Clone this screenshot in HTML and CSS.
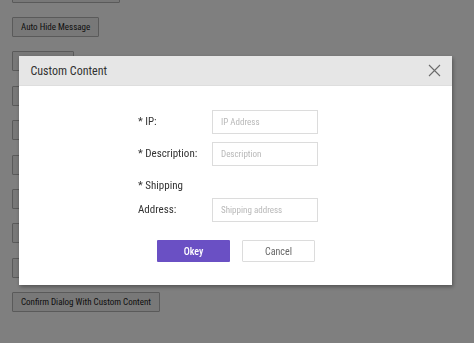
FILE: index.html
```html
<!DOCTYPE html>
<html lang="en">
<head>
    <meta charset="UTF-8">
    <meta name="viewport" content="width=device-width, initial-scale=1.0">
    <title>Dialog Demo</title>
    <link rel="stylesheet" href="styles.css">
</head>
<body>
    <div class="demo-list">
        <button class="demo-btn">Message With Close Icon</button>
        <button class="demo-btn">Auto Hide Message</button>
        <button class="demo-btn">Basic Dialog</button>
        <button class="demo-btn">Alert Dialog</button>
        <button class="demo-btn">Confirm Dialog</button>
        <button class="demo-btn">Prompt Dialog</button>
        <button class="demo-btn">Dialog With Title</button>
        <button class="demo-btn">Dialog Without Mask</button>
        <button class="demo-btn">Draggable Dialog</button>
        <button class="demo-btn">Confirm Dialog With Custom Content</button>
    </div>

    <div class="mask">
        <div class="dialog">
            <div class="dialog-header">
                <span class="dialog-title">Custom Content</span>
                <button class="dialog-close" aria-label="Close">
                    <svg width="13" height="13" viewBox="0 0 13 13">
                        <path d="M1 1 L12 12 M12 1 L1 12" stroke="#6b6b6b" stroke-width="1.1" fill="none"/>
                    </svg>
                </button>
            </div>
            <div class="dialog-body">
                <form class="form-grid">
                    <label class="form-label" for="ip">* IP:</label>
                    <input class="form-input" id="ip" type="text" placeholder="IP Address">

                    <label class="form-label" for="desc">* Description:</label>
                    <input class="form-input" id="desc" type="text" placeholder="Description">

                    <label class="form-label" for="addr">* Shipping<br>Address:</label>
                    <input class="form-input" id="addr" type="text" placeholder="Shipping address">
                </form>
                <div class="dialog-actions">
                    <button class="btn btn-primary">Okey</button>
                    <button class="btn btn-default">Cancel</button>
                </div>
            </div>
        </div>
    </div>
</body>
</html>
```

FILE: styles.css
```css
:root {
    --primary: #6a50c4;
    --border: #dcdcdc;
    --text: #333;
}

body {
    font-family: Roboto, 'Liberation Sans', sans-serif;
    font-stretch: 75%;
    margin: 0;
    padding: 0 12px;
    background: #fff;
    overflow: hidden;
    height: 343px;
}

.demo-list {
    display: flex;
    flex-direction: column;
    align-items: flex-start;
    gap: 14.4px;
    margin-top: -17.4px;
}

.demo-btn {
    font-family: inherit;
    font-stretch: 75%;
    height: 20px;
    padding: 0 8px;
    font-size: 9px;
    color: #222;
    background: #f0f0f0;
    border: 1px solid #b4b4b4;
    border-radius: 1px;
}

.mask {
    position: fixed;
    inset: 0;
    background: rgba(0, 0, 0, 0.5);
    display: flex;
    align-items: center;
    justify-content: center;
    padding: 0 4px 2px 0;
}

.dialog {
    width: 433px;
    background: #fff;
    box-shadow: 1px 2px 4px rgba(0, 0, 0, 0.35);
}

.dialog-header {
    height: 30px;
    background: #e6e6e6;
    border-bottom: 1px solid #dedede;
    box-sizing: border-box;
    display: flex;
    align-items: center;
    justify-content: space-between;
    padding: 0 10px 0 12px;
}

.dialog-title {
    font-size: 12px;
    color: var(--text);
}

.dialog-close {
    background: none;
    border: none;
    padding: 0;
    width: 15px;
    height: 15px;
    display: flex;
    align-items: center;
    justify-content: center;
}

.dialog-body {
    padding: 24px 0 23px;
}

.form-grid {
    display: grid;
    grid-template-columns: 74px 120px;
    row-gap: 8px;
    align-items: end;
    justify-content: center;
    margin: 0;
}

.form-label {
    font-size: 11px;
    line-height: 24px;
    color: var(--text);
}

.form-input {
    font-family: inherit;
    font-stretch: 75%;
    width: 106px;
    height: 24px;
    box-sizing: border-box;
    border: 1px solid var(--border);
    padding: 0 8px;
    font-size: 9px;
    outline: none;
}

.form-input::placeholder {
    color: #b8b8b8;
}

.dialog-actions {
    display: flex;
    justify-content: center;
    gap: 12px;
    margin-top: 18px;
    padding-left: 2px;
}

.btn {
    font-family: inherit;
    font-stretch: 75%;
    width: 73px;
    height: 22px;
    font-size: 10px;
    border-radius: 1px;
    cursor: pointer;
}

.btn-primary {
    background: var(--primary);
    color: #fff;
    border: none;
    font-weight: 500;
}

.btn-default {
    background: #fff;
    color: #666;
    border: 1px solid var(--border);
}
```
